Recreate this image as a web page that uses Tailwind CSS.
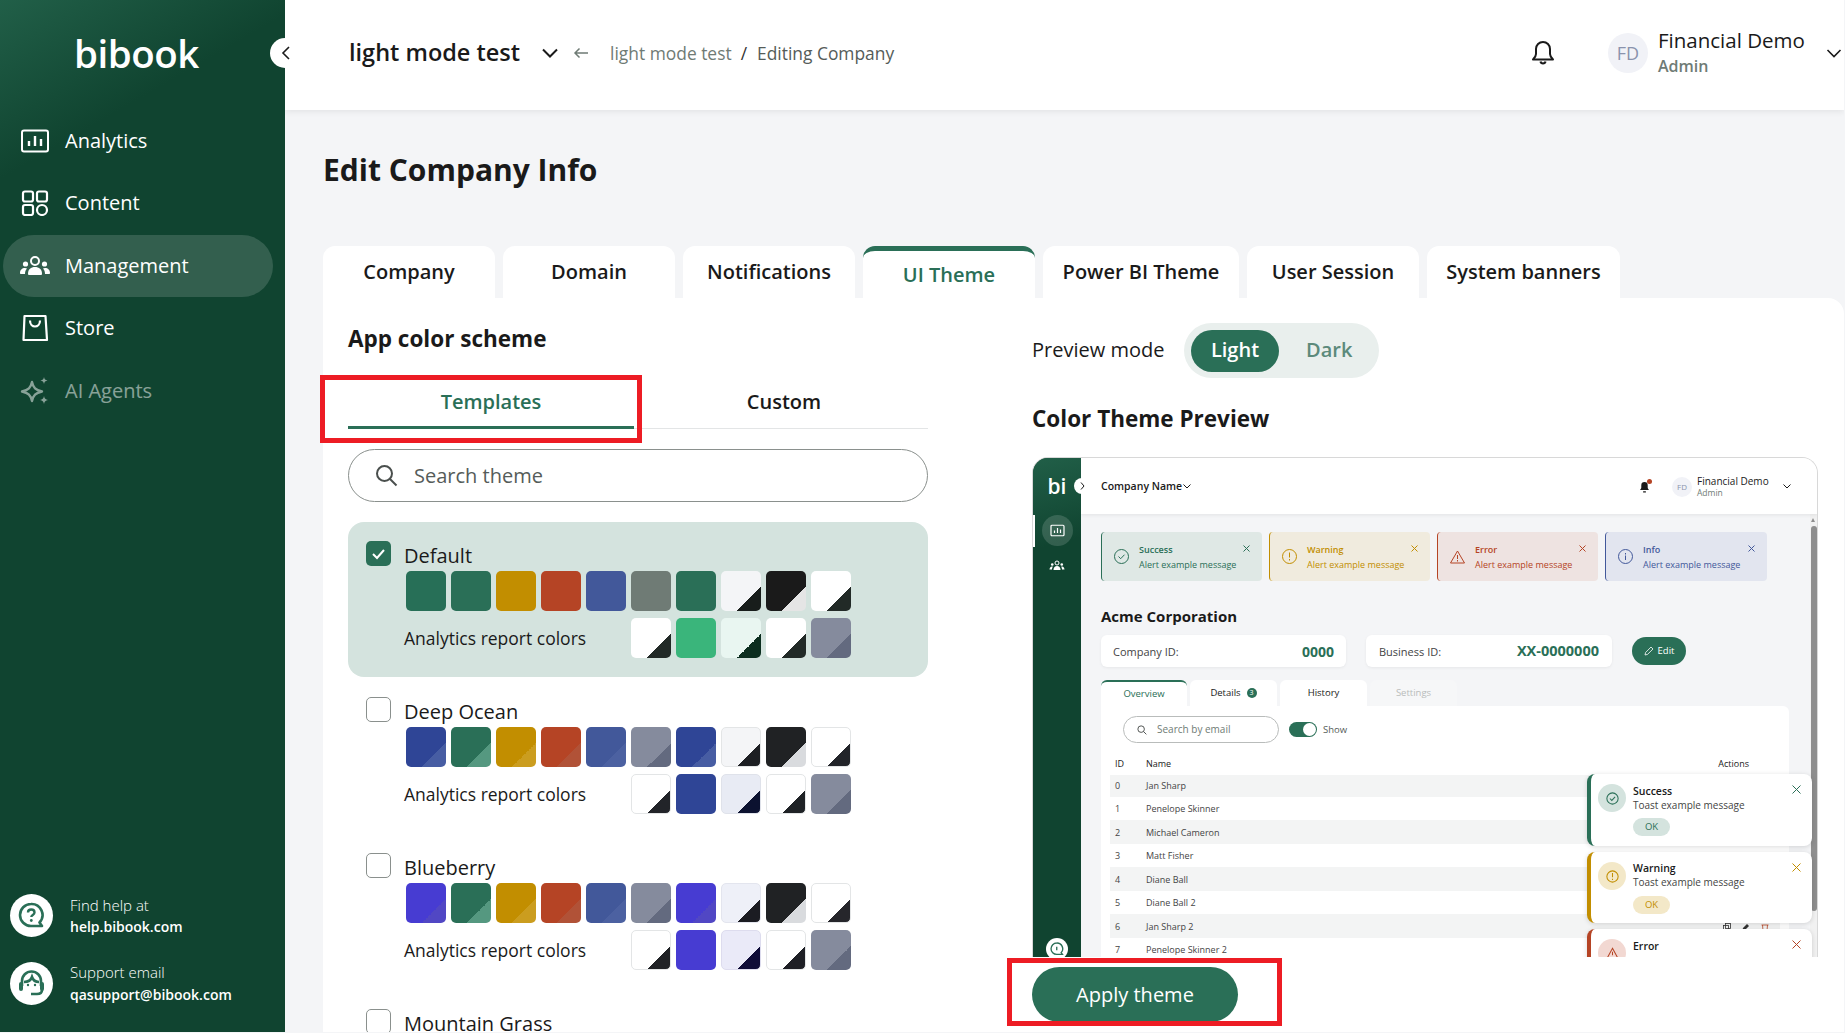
<!DOCTYPE html>
<html lang="en">
<head>
    <meta charset="UTF-8">
    <meta name="viewport" content="width=device-width, initial-scale=1.0">
    <title>Edit Company Info</title>
    <script src="https://cdn.jsdelivr.net/npm/@tailwindcss/browser@4"></script>
</head>
<body class="bg-[#f4f5f7] overflow-hidden font-['Open_Sans',sans-serif] text-[#1a1a1a]">
<div class="flex w-[1844px] h-[1032px] overflow-hidden">

    <!-- Sidebar -->
    <aside class="relative z-20 w-[285px] shrink-0 flex flex-col bg-[#104430] bg-[linear-gradient(150deg,#215f48_0%,#104430_15%)] text-white">
        <div class="h-[110px] pl-[74px] pt-[24px] text-[38.500px] leading-[58px] font-semibold tracking-[-0.5px]">bibook</div>
        <button class="absolute left-[270px] top-[38px] size-[30px] rounded-full bg-white flex items-center justify-center text-[#1a1a1a]">
            <svg class="ml-[2px]" width="10" height="16" viewBox="0 0 10 16" fill="none" stroke="currentColor" stroke-width="1.6"><path d="M8 2 2 8l6 6"/></svg>
        </button>
        <nav class="flex flex-col pl-[3px] pr-[12px] text-[20px]">
            <a class="h-[62px] flex items-center pl-[17px]">
                <svg class="w-[30px] mr-[15px]" width="30" height="26" viewBox="0 0 30 26" fill="none" stroke="white" stroke-width="2"><rect x="2" y="2.5" width="26" height="21" rx="2"/><path d="M9 18v-5M15 18V8M21 18v-7" stroke-width="2.4"/></svg>
                Analytics</a>
            <a class="h-[63px] pb-[1px] flex items-center pl-[17px]">
                <svg class="w-[30px] mr-[15px]" width="30" height="26" viewBox="0 0 30 26" fill="none" stroke="white" stroke-width="2.2"><rect x="3" y="1.5" width="10" height="10" rx="2"/><rect x="17" y="1.5" width="10" height="10" rx="2"/><rect x="3" y="15" width="10" height="10" rx="2"/><circle cx="22" cy="20" r="5"/></svg>
                Content</a>
            <a class="h-[62px] flex items-center pl-[17px] rounded-full bg-white/15">
                <svg class="w-[30px] mr-[15px]" width="30" height="22" viewBox="0 0 30 22" fill="white"><circle cx="15" cy="6" r="4" fill="none" stroke="white" stroke-width="2"/><circle cx="5.5" cy="9" r="2.6"/><circle cx="24.5" cy="9" r="2.6"/><path d="M8 19c0-5 3-7 7-7s7 2 7 7c0 1-1 1-2 1H10c-1 0-2 0-2-1Z"/><path d="M0 18c0-3 2-5 5-5 1 0 1.500.2 2 .5C5.500 15 5 17 5 19H1c-.6 0-1-.4-1-1ZM30 18c0-3-2-5-5-5-1 0-1.500.2-2 .5 1.500 1.500 2 3.500 2 5.500h4c.6 0 1-.4 1-1Z"/></svg>
                Management</a>
            <a class="h-[62px] flex items-center pl-[17px]">
                <svg class="w-[30px] mr-[15px]" width="30" height="28" viewBox="0 0 30 28" fill="none" stroke="white" stroke-width="2.2"><path d="M4.500 2h21L27 26H3.500L4.500 2Z" stroke-linejoin="round"/><path d="M10 6.500c0 8 10 8 10 0"/></svg>
                Store</a>
            <a class="h-[63px] flex items-center pl-[17px] opacity-50">
                <svg class="w-[30px] mr-[15px]" width="30" height="28" viewBox="0 0 30 28" fill="none" stroke="white" stroke-width="2.400"><path d="M12 5c1.300 6 3.500 8 10 9.500-6.500 1.500-8.700 3.500-10 9.500-1.300-6-3.500-8-10-9.500C8.500 13 10.700 11 12 5Z" stroke-linejoin="round"/><path d="M24 0c.5 2.400 1.200 3 3.500 3.500C25.200 4 24.500 4.600 24 7c-.5-2.400-1.200-3-3.500-3.500C22.800 3 23.500 2.400 24 0ZM24 19c.6 2.800 1.400 3.500 4 4-2.600.5-3.400 1.200-4 4-.6-2.800-1.400-3.500-4-4 2.600-.5 3.400-1.200 4-4Z" fill="white" stroke="none"/></svg>
                AI Agents</a>
        </nav>
        <div class="mt-auto pl-[10px] pb-[27px] flex flex-col gap-[25px]">
            <div class="flex items-center h-[43px]">
                <div class="size-[43px] rounded-full bg-white flex items-center justify-center mr-[17px]">
                    <svg width="27" height="27" viewBox="0 0 27 27" fill="none" stroke="#2a6f57" stroke-width="2.6"><path d="M13 2a11 11 0 1 0 0 22h11l-2.500-3.500A11 11 0 0 0 13 2Z" stroke-linejoin="round"/><path d="M10 10.500c0-4 6.500-4 6.500 0 0 2.500-3.200 2.500-3.200 4.500" stroke-width="2.400"/><circle cx="13.300" cy="18.500" r="1.400" fill="#2a6f57" stroke="none"/></svg>
                </div>
                <div>
                    <div class="text-[15px] leading-[21px] font-light">Find help at</div>
                    <div class="text-[14px] leading-[21px] font-semibold">help.bibook.com</div>
                </div>
            </div>
            <div class="flex items-center h-[43px]">
                <div class="size-[43px] rounded-full bg-white flex items-center justify-center mr-[17px]">
                    <svg width="29" height="29" viewBox="0 0 29 29" fill="none" stroke="#2a6f57" stroke-width="2.600"><path d="M5 17v-5a9.500 9.500 0 0 1 19 0v5"/><path d="M7 13c4 0 7-2 8-5 1 3 4 5 7 5"/><rect x="2" y="13" width="4" height="9" rx="2" fill="#2a6f57" stroke="none"/><rect x="23" y="13" width="4" height="9" rx="2" fill="#2a6f57" stroke="none"/><path d="M25 21c0 3-2 4-5 4h-6"/><circle cx="11" cy="16" r="1.200" fill="#2a6f57" stroke="none"/><circle cx="18" cy="16" r="1.200" fill="#2a6f57" stroke="none"/></svg>
                </div>
                <div>
                    <div class="text-[15px] leading-[21px] font-light">Support email</div>
                    <div class="text-[14px] leading-[23px] font-semibold">qasupport@bibook.com</div>
                </div>
            </div>
        </div>
    </aside>

    <div class="flex-1 min-w-0 flex flex-col">
        <!-- Top bar -->
        <header class="relative z-10 h-[110px] shrink-0 bg-white shadow-[0_2px_6px_rgba(0,0,0,0.07)] flex items-center pb-[4px] pl-[64px] pr-0">
            <span class="text-[23.500px] font-semibold">light mode test</span>
            <svg class="ml-[21px]" width="18" height="10" viewBox="0 0 18 10" fill="none" stroke="#1a1a1a" stroke-width="2"><path d="m2 1.500 7 7 7-7"/></svg>
            <svg class="ml-[14px]" width="16" height="12" viewBox="0 0 16 12" fill="none" stroke="#6f7b75" stroke-width="1.500"><path d="M15 6H2M6.500 1.500 2 6l4.500 4.500"/></svg>
            <span class="ml-[21px] text-[17.400px] text-[#6f7b75]">light mode test</span>
            <span class="ml-[9px] text-[17.400px] text-[#333]">/</span>
            <span class="ml-[10px] text-[17.400px] text-[#555c59]">Editing Company</span>
            <svg class="ml-auto mr-[53px]" width="24" height="26" viewBox="0 0 24 26" fill="none" stroke="#1a1a1a" stroke-width="2"><path d="M12 2a7 7 0 0 0-7 7v5c0 2-1.500 4-3 5.500h20c-1.500-1.500-3-3.500-3-5.500V9a7 7 0 0 0-7-7Z" stroke-linejoin="round"/><path d="M9.500 21.500c.5 2.500 4.500 2.500 5 0"/></svg>
            <div class="size-[40px] rounded-full bg-[#f1f2f7] text-[#8a93ad] text-[18px] flex items-center justify-center">FD</div>
            <div class="ml-[10px] w-[168px]">
                <div class="text-[20.500px] leading-[26px] font-medium">Financial Demo</div>
                <div class="text-[16px] leading-[26px] font-semibold text-[#6f7b75]">Admin</div>
            </div>
            <svg class="mr-[2px]" width="16" height="9" viewBox="0 0 16 9" fill="none" stroke="#1a1a1a" stroke-width="1.600"><path d="m1.500 1 6.500 6.500L14.500 1"/></svg>
        </header>

        <main class="flex-1 min-h-0 flex flex-col pl-[38px]">
            <div class="h-[136px] shrink-0 pt-[40px]">
                <h1 class="text-[30px] leading-[40px] font-bold">Edit Company Info</h1>
            </div>

            <div class="flex gap-[8px] h-[52px] shrink-0 text-[20px] font-semibold">
                <div class="w-[172px] rounded-t-xl bg-white flex justify-center pt-[11px]">Company</div>
                <div class="w-[172px] rounded-t-xl bg-white flex justify-center pt-[11px]">Domain</div>
                <div class="w-[172px] rounded-t-xl bg-white flex justify-center pt-[11px]">Notifications</div>
                <div class="w-[172px] rounded-t-xl bg-white border-t-[5px] border-[#2a6f57] flex justify-center pt-[9px] text-[#2a6f57]">UI Theme</div>
                <div class="w-[196px] rounded-t-xl bg-white flex justify-center pt-[11px]">Power BI Theme</div>
                <div class="w-[172px] rounded-t-xl bg-white flex justify-center pt-[11px]">User Session</div>
                <div class="w-[193px] rounded-t-xl bg-white flex justify-center pt-[11px]">System banners</div>
            </div>

            <section class="flex-1 min-h-0 flex bg-white rounded-tr-2xl">
                <!-- Left column: theme templates -->
                <div class="w-[709px] shrink-0 pl-[25px]">
                    <div class="w-[580px]">
                        <h2 class="pt-[26px] text-[22.500px] leading-[30px] font-bold">App color scheme</h2>
                        <div class="relative mt-[26px] h-[49px] flex border-b border-[#e3e5e6] text-[20px] font-semibold">
                            <div class="w-[286px] h-[49px] border-b-[3px] border-[#2a6f57] text-[#2a6f57] text-center pt-[7px]">Templates</div>
                            <div class="flex-1 text-center pt-[7px] pl-[6px]">Custom</div>
                            <div class="absolute left-[-28px] top-[-5px] w-[322px] h-[68px] border-[5px] border-[#ed1c24]"></div>
                        </div>
                        <div class="mt-[20px] h-[53px] rounded-full border border-[#8a908d] flex items-center pl-[26px] text-[20px] text-[#555c59]">
                            <svg class="mr-[16px]" width="23" height="23" viewBox="0 0 23 23" fill="none" stroke="#4a4f4d" stroke-width="2"><circle cx="9.500" cy="9.500" r="7.500"/><path d="m15 15 6.500 6.500"/></svg>
                            Search theme
                        </div>

                        <!-- Default -->
                        <div class="mt-[20px] h-[155px] mb-[1px] rounded-2xl bg-[#d4e3de] flex pl-[18px] pt-[19px]">
                            <div class="size-[25px] rounded-[5px] bg-[#2a6f57] flex items-center justify-center mr-[13px]">
                                <svg width="15" height="12" viewBox="0 0 15 12" fill="none" stroke="white" stroke-width="2"><path d="m2 6 4 4 7-8"/></svg>
                            </div>
                            <div>
                                <div class="text-[20px] leading-[30px]">Default</div>
                                <div class="ml-[2px] flex gap-[5px]">
                                    <div class="size-10 rounded-[5px] bg-[#276f57]"></div>
                                    <div class="size-10 rounded-[5px] bg-[#2a6f57]"></div>
                                    <div class="size-10 rounded-[5px] bg-[#c28e00]"></div>
                                    <div class="size-10 rounded-[5px] bg-[#b54425]"></div>
                                    <div class="size-10 rounded-[5px] bg-[#42589a]"></div>
                                    <div class="size-10 rounded-[5px] bg-[#6f7b75]"></div>
                                    <div class="size-10 rounded-[5px] bg-[#2a6f57]"></div>
                                    <div class="size-10 rounded-[5px] bg-[linear-gradient(135deg,#f4f5f7_70%,#181d1b_70%)]"></div>
                                    <div class="size-10 rounded-[5px] bg-[linear-gradient(135deg,#1a1a1a_70%,#e5e5e5_70%)]"></div>
                                    <div class="size-10 rounded-[5px] bg-[linear-gradient(135deg,#ffffff_70%,#222a27_70%)]"></div>
                                </div>
                                <div class="mt-[7px] flex items-center w-[447px] text-[17.500px]">
                                    <span class="mr-auto">Analytics report colors</span>
                                    <div class="flex gap-[5px]">
                                        <div class="size-10 rounded-[5px] bg-[linear-gradient(135deg,#ffffff_70%,#222a27_70%)]"></div>
                                        <div class="size-10 rounded-[5px] bg-[#3ab57b]"></div>
                                        <div class="size-10 rounded-[5px] bg-[linear-gradient(135deg,#e9f6f1_70%,#0c2e1f_70%)]"></div>
                                        <div class="size-10 rounded-[5px] bg-[linear-gradient(135deg,#ffffff_70%,#222a27_70%)]"></div>
                                        <div class="size-10 rounded-[5px] bg-[linear-gradient(135deg,#858b9d_70%,#636a7f_70%)]"></div>
                                    </div>
                                </div>
                            </div>
                        </div>

                        <!-- Deep Ocean -->
                        <div class="h-[156px] flex pl-[18px] pt-[19px]">
                            <div class="size-[25px] rounded-[5px] border border-[#8a908d] mr-[13px]"></div>
                            <div>
                                <div class="text-[20px] leading-[30px]">Deep Ocean</div>
                                <div class="ml-[2px] flex gap-[5px]">
                                    <div class="size-10 rounded-[5px] bg-[linear-gradient(135deg,#2f4596_70%,#475da3_70%)]"></div>
                                    <div class="size-10 rounded-[5px] bg-[linear-gradient(135deg,#2a6f57_70%,#559880_70%)]"></div>
                                    <div class="size-10 rounded-[5px] bg-[linear-gradient(135deg,#c28e00_70%,#cb9d1f_70%)]"></div>
                                    <div class="size-10 rounded-[5px] bg-[linear-gradient(135deg,#b54425_70%,#b15237_70%)]"></div>
                                    <div class="size-10 rounded-[5px] bg-[linear-gradient(135deg,#42589a_70%,#4c61a1_70%)]"></div>
                                    <div class="size-10 rounded-[5px] bg-[linear-gradient(135deg,#858b9d_70%,#636a7f_70%)]"></div>
                                    <div class="size-10 rounded-[5px] bg-[linear-gradient(135deg,#2f4596_70%,#475da3_70%)]"></div>
                                    <div class="size-10 rounded-[5px] border border-[#e3e5e6] bg-[linear-gradient(135deg,#f4f5f7_70%,#1d1f23_70%)]"></div>
                                    <div class="size-10 rounded-[5px] bg-[linear-gradient(135deg,#202224_70%,#d9dbde_70%)]"></div>
                                    <div class="size-10 rounded-[5px] border border-[#e3e5e6] bg-[linear-gradient(135deg,#ffffff_70%,#222429_70%)]"></div>
                                </div>
                                <div class="mt-[7px] flex items-center w-[447px] text-[17.500px]">
                                    <span class="mr-auto">Analytics report colors</span>
                                    <div class="flex gap-[5px]">
                                        <div class="size-10 rounded-[5px] border border-[#e3e5e6] bg-[linear-gradient(135deg,#ffffff_70%,#222429_70%)]"></div>
                                        <div class="size-10 rounded-[5px] bg-[#2f4596]"></div>
                                        <div class="size-10 rounded-[5px] border border-[#dfe2ea] bg-[linear-gradient(135deg,#e8ebf4_70%,#0c1230_70%)]"></div>
                                        <div class="size-10 rounded-[5px] border border-[#e3e5e6] bg-[linear-gradient(135deg,#ffffff_70%,#1f2226_70%)]"></div>
                                        <div class="size-10 rounded-[5px] bg-[linear-gradient(135deg,#858b9d_70%,#636a7f_70%)]"></div>
                                    </div>
                                </div>
                            </div>
                        </div>

                        <!-- Blueberry -->
                        <div class="h-[156px] flex pl-[18px] pt-[19px]">
                            <div class="size-[25px] rounded-[5px] border border-[#8a908d] mr-[13px]"></div>
                            <div>
                                <div class="text-[20px] leading-[30px]">Blueberry</div>
                                <div class="ml-[2px] flex gap-[5px]">
                                    <div class="size-10 rounded-[5px] bg-[linear-gradient(135deg,#473cd2_70%,#5147c4_70%)]"></div>
                                    <div class="size-10 rounded-[5px] bg-[linear-gradient(135deg,#2a6f57_70%,#559880_70%)]"></div>
                                    <div class="size-10 rounded-[5px] bg-[linear-gradient(135deg,#c28e00_70%,#cb9d1f_70%)]"></div>
                                    <div class="size-10 rounded-[5px] bg-[linear-gradient(135deg,#b54425_70%,#b15237_70%)]"></div>
                                    <div class="size-10 rounded-[5px] bg-[linear-gradient(135deg,#42589a_70%,#4c61a1_70%)]"></div>
                                    <div class="size-10 rounded-[5px] bg-[linear-gradient(135deg,#858b9d_70%,#636a7f_70%)]"></div>
                                    <div class="size-10 rounded-[5px] bg-[linear-gradient(135deg,#473cd2_70%,#5147c4_70%)]"></div>
                                    <div class="size-10 rounded-[5px] border border-[#e3e5ee] bg-[linear-gradient(135deg,#eef0f8_70%,#1b1c22_70%)]"></div>
                                    <div class="size-10 rounded-[5px] bg-[linear-gradient(135deg,#202224_70%,#d9dbde_70%)]"></div>
                                    <div class="size-10 rounded-[5px] border border-[#e3e5e6] bg-[linear-gradient(135deg,#ffffff_70%,#26262b_70%)]"></div>
                                </div>
                                <div class="mt-[7px] flex items-center w-[447px] text-[17.500px]">
                                    <span class="mr-auto">Analytics report colors</span>
                                    <div class="flex gap-[5px]">
                                        <div class="size-10 rounded-[5px] border border-[#e3e5e6] bg-[linear-gradient(135deg,#ffffff_70%,#202226_70%)]"></div>
                                        <div class="size-10 rounded-[5px] bg-[#473cd2]"></div>
                                        <div class="size-10 rounded-[5px] border border-[#dddcee] bg-[linear-gradient(135deg,#eaeaf8_70%,#0f0c38_70%)]"></div>
                                        <div class="size-10 rounded-[5px] border border-[#e3e5e6] bg-[linear-gradient(135deg,#ffffff_70%,#1f2026_70%)]"></div>
                                        <div class="size-10 rounded-[5px] bg-[linear-gradient(135deg,#858b9d_70%,#636a7f_70%)]"></div>
                                    </div>
                                </div>
                            </div>
                        </div>

                        <!-- Mountain Grass -->
                        <div class="h-[60px] flex pl-[18px] pt-[19px]">
                            <div class="size-[25px] rounded-[5px] border border-[#8a908d] mr-[13px]"></div>
                            <div class="text-[20px] leading-[30px]">Mountain Grass</div>
                        </div>
                    </div>
                </div>

                <!-- Right column: preview -->
                <div class="w-[786px] shrink-0 flex flex-col overflow-hidden">
                    <div class="mt-[25px] h-[55px] flex items-center shrink-0">
                        <span class="w-[152px] pb-[2px] text-[20px]">Preview mode</span>
                        <div class="w-[195px] h-[55px] rounded-full bg-[#e9efed] flex items-center pl-[7px] text-[20px] font-semibold">
                            <div class="w-[88px] h-[42px] rounded-full bg-[#2a6f57] text-white pb-[2px] flex items-center justify-center">Light</div>
                            <div class="ml-[27px] pb-[2px] text-[#5c8a7b]">Dark</div>
                        </div>
                    </div>
                    <h2 class="pt-[26px] pb-[23px] shrink-0 text-[22.500px] leading-[30px] font-bold">Color Theme Preview</h2>

                    <!-- Embedded app preview -->
                    <div class="h-[500px] shrink-0 flex overflow-hidden rounded-t-2xl border border-b-0 border-[#d8d8d8]">
                        <div class="relative z-20 w-[48px] shrink-0 bg-[#104430] bg-[linear-gradient(165deg,#215f48_0%,#104430_18%)] text-white flex flex-col items-center">
                            <div class="h-[57px] text-[21px] leading-[56px] font-semibold">bi</div>
                            <div class="absolute left-[41px] top-[20px] size-[16px] rounded-full bg-white flex items-center justify-center">
                                <svg class="ml-[1px]" width="5" height="8" viewBox="0 0 5 8" fill="none" stroke="#1a1a1a"><path d="m1 .5 3 3.500-3 3.500"/></svg>
                            </div>
                            <div class="relative size-[31px] rounded-full bg-white/15 flex items-center justify-center">
                                <svg width="15" height="13" viewBox="0 0 30 26" fill="none" stroke="white" stroke-width="2.400"><rect x="2" y="2.500" width="26" height="21" rx="2"/><path d="M9 18v-5M15 18V8M21 18v-7"/></svg>
                            </div>
                            <svg class="mt-[14px]" width="16" height="11" viewBox="0 0 30 22" fill="white"><circle cx="15" cy="6" r="4" fill="none" stroke="white" stroke-width="2"/><circle cx="5.500" cy="9" r="2.600"/><circle cx="24.500" cy="9" r="2.600"/><path d="M8 20c0-5 3-8 7-8s7 3 7 8H8Z"/><path d="M0 19c0-3 2-6 5-6l2 .5C5.500 15 5 17 5 19H0ZM30 19c0-3-2-6-5-6l-2 .5c1.500 1.500 2 3.500 2 5.500h5Z"/></svg>
                            <div class="absolute left-0 top-[57px] w-[2px] h-[32px] bg-white"></div>
                            <div class="absolute left-[13px] top-[480px] size-[22px] rounded-full bg-white flex items-center justify-center">
                                <svg width="14" height="14" viewBox="0 0 27 27" fill="none" stroke="#2a6f57" stroke-width="2.600"><path d="M13 2a11 11 0 1 0 0 22h11l-2.500-3.500A11 11 0 0 0 13 2Z"/><path d="M13 9v7"/></svg>
                            </div>
                        </div>
                        <div class="flex-1 min-w-0 flex flex-col">
                            <div class="relative z-10 h-[56px] shrink-0 bg-white shadow-[0_1px_4px_rgba(0,0,0,0.08)] flex items-center pl-[20px] pt-[1px]">
                                <span class="text-[10.500px] font-semibold">Company Name</span>
                                <svg class="ml-[1px]" width="8" height="5" viewBox="0 0 8 5" fill="none" stroke="#1a1a1a"><path d="m.5.500 3.500 3.500L7.500.500"/></svg>
                                <div class="relative ml-auto mr-[22px]">
                                    <svg width="11" height="12" viewBox="0 0 24 26" fill="#1a1a1a"><path d="M12 2a7 7 0 0 0-7 7v5c0 2-1.500 4-3 5.500h20c-1.500-1.500-3-3.500-3-5.500V9a7 7 0 0 0-7-7Z"/><path d="M9 22h6v3H9z"/></svg>
                                    <div class="absolute -right-[2px] -top-[2px] size-[5px] rounded-full bg-[#b54425]"></div>
                                </div>
                                <div class="size-[20px] rounded-full bg-[#f1f2f7] text-[#8a93ad] text-[8px] flex items-center justify-center">FD</div>
                                <div class="ml-[5px] w-[86px]">
                                    <div class="text-[10px] leading-[12px] font-medium">Financial Demo</div>
                                    <div class="text-[8.500px] leading-[12px] text-[#6f7b75]">Admin</div>
                                </div>
                                <svg class="mr-[26px]" width="8" height="5" viewBox="0 0 8 5" fill="none" stroke="#1a1a1a"><path d="m.5.500 3.500 3.500L7.500.500"/></svg>
                            </div>
                            <div class="relative flex-1 min-h-0 flex bg-[#f4f5f7]">
                                <div class="flex-1 min-w-0 pl-[20px] overflow-hidden">
                                    <div class="pt-[18px] flex gap-[7px] text-[9px] leading-[15px]">
                                        <div class="relative w-[161px] h-[49px] rounded-[4px] border-l border-[#2a6f57] bg-[#dfe8e5] text-[#2a6f57] flex items-center pl-[12px]">
                                            <svg class="mr-[10px]" width="15" height="15" viewBox="0 0 15 15" fill="none" stroke="currentColor"><circle cx="7.500" cy="7.500" r="7"/><path d="m4.500 7.500 2.200 2.200 3.800-4"/></svg>
                                            <div><div class="font-semibold">Success</div><div>Alert example message</div></div>
                                            <svg class="absolute right-[12px] top-[13px]" width="7" height="7" viewBox="0 0 7 7" stroke="currentColor"><path d="m.5.500 6 6M6.500.500l-6 6"/></svg>
                                        </div>
                                        <div class="relative w-[161px] h-[49px] rounded-[4px] border-l border-[#c28e00] bg-[#f0ebde] text-[#c28e00] flex items-center pl-[12px]">
                                            <svg class="mr-[10px]" width="15" height="15" viewBox="0 0 15 15" fill="none" stroke="currentColor"><circle cx="7.500" cy="7.500" r="7"/><path d="M7.500 3.500v5M7.500 10v1.500"/></svg>
                                            <div><div class="font-semibold">Warning</div><div>Alert example message</div></div>
                                            <svg class="absolute right-[12px] top-[13px]" width="7" height="7" viewBox="0 0 7 7" stroke="currentColor"><path d="m.5.500 6 6M6.500.500l-6 6"/></svg>
                                        </div>
                                        <div class="relative w-[161px] h-[49px] rounded-[4px] border-l border-[#b54425] bg-[#eee3e1] text-[#b54425] flex items-center pl-[12px]">
                                            <svg class="mr-[10px]" width="15" height="14" viewBox="0 0 15 14" fill="none" stroke="currentColor"><path d="M7.500 1 14.500 13H.5L7.500 1Z" stroke-linejoin="round"/><path d="M7.500 5v4M7.500 10v1.500"/></svg>
                                            <div><div class="font-semibold">Error</div><div>Alert example message</div></div>
                                            <svg class="absolute right-[12px] top-[13px]" width="7" height="7" viewBox="0 0 7 7" stroke="currentColor"><path d="m.5.500 6 6M6.500.500l-6 6"/></svg>
                                        </div>
                                        <div class="relative w-[162px] h-[49px] rounded-[4px] border-l border-[#42589a] bg-[#e2e5ef] text-[#42589a] flex items-center pl-[12px]">
                                            <svg class="mr-[10px]" width="15" height="15" viewBox="0 0 15 15" fill="none" stroke="currentColor"><circle cx="7.500" cy="7.500" r="7"/><path d="M7.500 6.500v4.500M7.500 4v1.500"/></svg>
                                            <div><div class="font-semibold">Info</div><div>Alert example message</div></div>
                                            <svg class="absolute right-[12px] top-[13px]" width="7" height="7" viewBox="0 0 7 7" stroke="currentColor"><path d="m.5.500 6 6M6.500.500l-6 6"/></svg>
                                        </div>
                                    </div>
                                    <div class="mt-[25px] text-[15px] leading-[20px] font-bold">Acme Corporation</div>
                                    <div class="mt-[9px] flex items-center">
                                        <div class="w-[245px] h-[32px] rounded-md bg-white shadow-[0_1px_3px_rgba(0,0,0,0.06)] flex items-center justify-between px-[12px] text-[11px] text-[#444]"><span class="pt-[2px]">Company ID:</span><span class="text-[14px] font-bold text-[#2a6f57]">0000</span></div>
                                        <div class="ml-[20px] w-[246px] h-[32px] rounded-md bg-white shadow-[0_1px_3px_rgba(0,0,0,0.06)] flex items-center justify-between px-[13px] text-[11px] text-[#444]"><span class="pt-[2px]">Business ID:</span><span class="text-[14.500px] font-bold text-[#2a6f57]">XX-0000000</span></div>
                                        <div class="ml-[20px] w-[54px] h-[28px] rounded-full bg-[#2a6f57] text-white text-[9.500px] flex items-center justify-center gap-[4px]">
                                            <svg width="10" height="10" viewBox="0 0 10 10" fill="none" stroke="white" stroke-width=".8"><path d="M1 9l.6-2.500L7 1l2 2-5.500 5.400L1 9Z"/></svg>Edit</div>
                                    </div>
                                    <div class="mt-[13px] h-[26px] flex gap-[3px] text-[9.500px] font-medium">
                                        <div class="w-[86px] rounded-t-md bg-white border-t-2 border-[#2a6f57] text-[#2a6f57] flex items-center justify-center">Overview</div>
                                        <div class="w-[87px] rounded-t-md bg-white flex items-center justify-center gap-[6px]">Details <span class="size-[10px] rounded-full bg-[#2a6f57] text-white text-[7px] flex items-center justify-center">3</span></div>
                                        <div class="w-[87px] rounded-t-md bg-white flex items-center justify-center">History</div>
                                        <div class="w-[87px] rounded-t-md bg-[#f6f7f8] text-[#b9bcbb] flex items-center justify-center">Settings</div>
                                    </div>
                                    <div class="w-[688px] h-[260px] rounded-tr-md bg-white text-[9px]">
                                        <div class="pt-[10px] pl-[22px] flex items-center">
                                            <div class="w-[156px] h-[27px] rounded-full border border-[#b9bcbb] flex items-center pl-[13px] text-[10px] text-[#6f7b75]">
                                                <svg class="mr-[10px]" width="10" height="10" viewBox="0 0 23 23" fill="none" stroke="#4a4f4d" stroke-width="2.200"><circle cx="9.500" cy="9.500" r="7.500"/><path d="m15 15 6.500 6.500"/></svg>
                                                Search by email</div>
                                            <div class="ml-[10px] w-[28px] h-[15px] rounded-full bg-[#2a6f57] flex items-center justify-end pr-[1px]"><div class="size-[13px] rounded-full bg-white"></div></div>
                                            <span class="ml-[6px] pt-[2px] text-[9.500px] text-[#555c59]">Show</span>
                                        </div>
                                        <div class="mt-[9px] h-[23px] ml-[9px] w-[670px] flex items-center pl-[5px] font-medium">
                                            <span class="w-[31px]">ID</span><span>Name</span><span class="ml-auto mr-[31px]">Actions</span>
                                        </div>
                                        <div class="ml-[9px] w-[670px] text-[#444]">
                                            <div class="h-[22px] bg-[#f3f4f4] flex items-center pl-[5px]"><span class="w-[31px]">0</span>Jan Sharp</div>
                                            <div class="h-[23px] pt-[1px] flex items-center pl-[5px]"><span class="w-[31px]">1</span>Penelope Skinner</div>
                                            <div class="h-[23.500px] pt-[1px] bg-[#f3f4f4] flex items-center pl-[5px]"><span class="w-[31px]">2</span>Michael Cameron</div>
                                            <div class="h-[23.500px] pt-[1px] flex items-center pl-[5px]"><span class="w-[31px]">3</span>Matt Fisher</div>
                                            <div class="h-[24px] pt-[1px] bg-[#f3f4f4] flex items-center pl-[5px]"><span class="w-[31px]">4</span>Diane Ball</div>
                                            <div class="h-[23px] pt-[1px] flex items-center pl-[5px]"><span class="w-[31px]">5</span>Diane Ball 2</div>
                                            <div class="h-[24px] pt-[1px] bg-[#f3f4f4] flex items-center pl-[5px]"><span class="w-[31px]">6</span>Jan Sharp 2
                                                <div class="ml-auto mr-[11px] flex gap-[11px] text-[#333]">
                                                    <svg width="8" height="8" viewBox="0 0 8 8" fill="none" stroke="currentColor" stroke-width=".8"><rect x="2.500" y=".5" width="5" height="5"/><rect x=".5" y="2.500" width="5" height="5"/></svg>
                                                    <svg width="8" height="8" viewBox="0 0 8 8" fill="currentColor"><path d="M0 8l1-3 4-4 2 2-4 4-3 1Z"/></svg>
                                                    <svg width="8" height="8" viewBox="0 0 8 8" fill="none" stroke="#b54425" stroke-width=".8"><path d="M.5 2h7M1.500 2l.5 5.500h4L6.500 2"/></svg>
                                                </div>
                                            </div>
                                            <div class="h-[22px] pt-[3px] border-b border-[#eee] flex items-center pl-[5px]"><span class="w-[31px]">7</span>Penelope Skinner 2</div>
                                        </div>
                                    </div>
                                </div>

                                <!-- Preview scrollbar -->
                                <div class="w-[7px] shrink-0 bg-[#f1f1f1] pt-[12px] relative">
                                    <div class="w-[6px] h-[385px] mx-auto rounded-sm bg-[#8e8e8e]"></div>
                                    <div class="absolute left-[1px] top-[4px] border-x-[2.500px] border-b-[4px] border-x-transparent border-b-[#8e8e8e]"></div>
                                </div>

                                <!-- Toasts lie over the table -->
                                <div class="absolute left-[506px] top-[260px] z-10 w-[225px] flex flex-col gap-[6px]">
                                    <div class="relative h-[72px] rounded-lg border-l-[4px] border-[#2a6f57] bg-white shadow-[0_1px_5px_rgba(0,0,0,0.15)] flex pl-[7px] pt-[10px]">
                                        <div class="size-[28px] rounded-full bg-[#d4e3de] flex items-center justify-center mr-[7px]">
                                            <svg width="13" height="13" viewBox="0 0 15 15" fill="none" stroke="#2a6f57" stroke-width="1.200"><circle cx="7.500" cy="7.500" r="6.500"/><path d="m4.500 7.500 2.200 2.200 3.800-4"/></svg>
                                        </div>
                                        <div>
                                            <div class="text-[10.500px] leading-[14px] font-semibold">Success</div>
                                            <div class="text-[10px] leading-[14px] text-[#444]">Toast example message</div>
                                            <div class="mt-[6px] w-[37px] h-[18px] rounded-full bg-[#d4e3de] text-[#2a6f57] text-[9.500px] flex items-center justify-center">OK</div>
                                        </div>
                                        <svg class="absolute right-[11px] top-[11px]" width="9" height="9" viewBox="0 0 9 9" stroke="#2a6f57"><path d="m.5.500 8 8M8.500.500l-8 8"/></svg>
                                    </div>
                                    <div class="relative h-[71px] rounded-lg border-l-[4px] border-[#c28e00] bg-white shadow-[0_1px_5px_rgba(0,0,0,0.15)] flex pl-[7px] pt-[9px]">
                                        <div class="size-[28px] mt-[1px] rounded-full bg-[#f3e8c8] flex items-center justify-center mr-[7px]">
                                            <svg width="13" height="13" viewBox="0 0 15 15" fill="none" stroke="#c28e00" stroke-width="1.200"><circle cx="7.500" cy="7.500" r="6.500"/><path d="M7.500 3.500v5M7.500 10v1.500"/></svg>
                                        </div>
                                        <div>
                                            <div class="text-[10.500px] leading-[14px] font-semibold">Warning</div>
                                            <div class="text-[10px] leading-[14px] text-[#444]">Toast example message</div>
                                            <div class="mt-[7px] w-[37px] h-[18px] rounded-full bg-[#f3e8c8] text-[#c28e00] text-[9.500px] flex items-center justify-center">OK</div>
                                        </div>
                                        <svg class="absolute right-[11px] top-[11px]" width="9" height="9" viewBox="0 0 9 9" stroke="#c28e00"><path d="m.5.500 8 8M8.500.500l-8 8"/></svg>
                                    </div>
                                    <div class="relative h-[71px] rounded-lg border-l-[4px] border-[#b54425] bg-white shadow-[0_1px_5px_rgba(0,0,0,0.15)] flex pl-[7px] pt-[10px]">
                                        <div class="size-[28px] rounded-full bg-[#f2d8d2] flex items-center justify-center mr-[7px]">
                                            <svg width="13" height="13" viewBox="0 0 15 14" fill="none" stroke="#b54425" stroke-width="1.200"><path d="M7.500 1 14 13H1L7.500 1Z"/><path d="M7.500 5v4"/></svg>
                                        </div>
                                        <div class="text-[10.500px] leading-[14px] font-semibold">Error</div>
                                        <svg class="absolute right-[11px] top-[11px]" width="9" height="9" viewBox="0 0 9 9" stroke="#b54425"><path d="m.5.500 8 8M8.500.500l-8 8"/></svg>
                                    </div>
                                </div>
                            </div>
                        </div>
                    </div>

                    <!-- Apply bar -->
                    <div class="relative z-10 flex-1 bg-white">
                        <button class="mt-[10px] w-[206px] h-[55px] rounded-full bg-[#2a6f57] text-white text-[20px]">Apply theme</button>
                    </div>
                </div>
                <!-- Annotation box round the apply button -->
                <div class="relative w-0 h-0 self-end">
                    <div class="absolute left-[-811px] bottom-[6px] w-[275px] h-[68px] border-[5px] border-[#ed1c24] z-20"></div>
                </div>
            </section>
        </main>
    </div>
</div>
</body>
</html>
